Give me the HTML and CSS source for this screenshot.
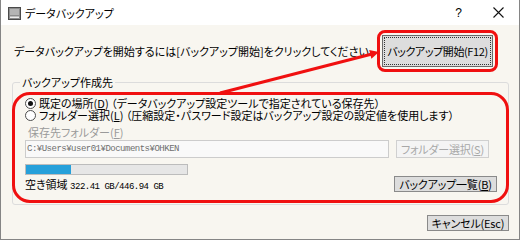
FILE: index.html
```html
<!DOCTYPE html>
<html lang="ja">
<head>
    <meta charset="UTF-8">
    <title>データバックアップ</title>
    <link rel="stylesheet" href="styles.css">
</head>
<body>
    <div class="window">
        <div class="titlebar">
            <svg class="app-icon" width="13" height="13" viewBox="0 0 13 13">
                <rect x="0.5" y="0.5" width="12" height="12" fill="#8c8c8c" stroke="#4a4a4a"/>
                <rect x="2" y="2" width="9" height="6" fill="#b4b4b4"/>
                <rect x="2" y="9.5" width="9" height="1.5" fill="#ececec"/>
            </svg>
            <span class="title">データバックアップ</span>
            <span class="help">?</span>
            <svg class="close" width="11" height="11" viewBox="0 0 11 11">
                <path d="M0.5 0.5 L10.5 10.5 M10.5 0.5 L0.5 10.5" stroke="#111" stroke-width="1.1"/>
            </svg>
        </div>

        <div class="body">
            <div class="intro">
                <p class="intro-text">データバックアップを開始するには[バックアップ開始]をクリックしてください</p>
                <div class="mark mark-btn">
                    <button class="btn btn-start">バックアップ開始(F12)</button>
                </div>
            </div>

            <fieldset class="group">
                <legend>バックアップ作成先</legend>
                <div class="mark mark-group">
                    <div class="radio-row">
                        <span class="radio checked"></span>
                        <span>既定の場所(<u>D</u>) （データバックアップ設定ツールで指定されている保存先）</span>
                    </div>
                    <div class="radio-row">
                        <span class="radio"></span>
                        <span>フォルダー選択(<u>L</u>) （圧縮設定・パスワード設定はバックアップ設定の設定値を使用します）</span>
                    </div>
                    <div class="field-label">保存先フォルダー(<u>F</u>)</div>
                    <div class="path-row">
                        <div class="textbox mono">C:¥Users¥user01¥Documents¥OHKEN</div>
                        <button class="btn btn-disabled">フォルダー選択(<u>S</u>)</button>
                    </div>
                    <div class="space-row">
                        <div class="space-info">
                            <div class="progress"><div class="progress-fill" style="width: 28%"></div></div>
                            <div class="space-text">空き領域 <span class="mono">322.41 GB/446.94 GB</span></div>
                        </div>
                        <button class="btn btn-list">バックアップ一覧(<u>B</u>)</button>
                    </div>
                </div>
            </fieldset>

            <div class="footer">
                <button class="btn btn-cancel">キャンセル(Esc)</button>
            </div>
        </div>

        <svg class="arrow" width="520" height="240" viewBox="0 0 520 240">
            <line x1="219" y1="93" x2="371" y2="54" stroke="#f01010" stroke-width="3"/>
            <polygon points="378,52 370.4,58.8 368.2,49.9" fill="#f01010"/>
        </svg>
    </div>
</body>
</html>
```

FILE: styles.css
```css
* {
    box-sizing: border-box;
}
body {
    margin: 0;
    font-family: "Noto Sans CJK JP", sans-serif;
    font-size: 11px;
    font-feature-settings: "palt";
    color: #000;
}
.window {
    position: relative;
    width: 520px;
    height: 240px;
    background-color: #f8f6f0;
    border: 1px solid #858585;
    border-top: none;
    overflow: hidden;
}
.titlebar {
    height: 25px;
    background-color: #fff;
    display: flex;
    align-items: center;
    padding-left: 7px;
}
.app-icon {
    margin-top: 1px;
}
.title {
    margin-left: 4px;
    font-size: 11px;
}
.help {
    margin-left: auto;
    font-family: "Liberation Sans", sans-serif;
    font-size: 12px;
    margin-right: 31px;
}
.close {
    margin-right: 15px;
}
.body {
    padding: 0 10px 0 11px;
}
.intro {
    display: flex;
    align-items: center;
    justify-content: space-between;
    margin-top: 5px;
    padding-left: 2px;
    padding-right: 11px;
}
.intro-text {
    margin: 0;
    line-height: 12px;
}
.mark {
    border: 3px solid #f01010;
}
.mark-btn {
    border-radius: 8px;
    padding: 2px;
}
.btn {
    font-family: "Noto Sans CJK JP", sans-serif;
    font-size: 11px;
    font-feature-settings: "palt";
    color: #000;
    background-color: #dddddd;
    border: 1px solid #8a8a8a;
    padding: 0;
    margin: 0;
    line-height: 12px;
    white-space: nowrap;
    letter-spacing: -0.2px;
}
.btn-start {
    width: 111px;
    height: 32px;
    border-color: #6a6a6a;
    outline: 1px dotted #333;
    outline-offset: -3px;
    letter-spacing: -0.4px;
}
.group {
    margin: 4px 0 0 0;
    padding: 0;
    border: 1px solid #dcdcdc;
    border-radius: 3px;
}
.group legend {
    margin-left: 7px;
    padding: 0 2px;
    line-height: 12px;
}
.mark-group {
    margin: 4px -1px 1px -1px;
    border-radius: 18px;
    padding: 2px 9px 7px 10px;
}
.radio-row {
    display: flex;
    align-items: center;
    height: 12px;
    line-height: 12px;
    white-space: nowrap;
}
.radio {
    width: 11px;
    height: 11px;
    border: 1px solid #4d4d4d;
    border-radius: 50%;
    background-color: #fff;
    margin-right: 3px;
    display: flex;
    align-items: center;
    justify-content: center;
}
.radio.checked::after {
    content: "";
    width: 5px;
    height: 5px;
    border-radius: 50%;
    background-color: #111;
}
.field-label {
    margin-top: 5px;
    padding-left: 3px;
    line-height: 12px;
    color: #9a9a9a;
}
.path-row {
    display: flex;
    gap: 7px;
    margin-top: 2px;
}
.textbox {
    width: 364px;
    height: 18px;
    border: 1px solid #cccccc;
    background-color: #f9f9f9;
    color: #6e6e6e;
    padding-left: 1px;
    line-height: 16px;
}
.mono {
    font-family: "Liberation Mono", monospace;
    font-size: 9px;
    letter-spacing: -0.5px;
    font-feature-settings: normal;
}
.btn-disabled {
    width: 93px;
    height: 18px;
    color: #a8a8a8;
    background-color: #f4f4f4;
    border-color: #d0d0d0;
}
.space-row {
    display: flex;
    justify-content: space-between;
    margin-top: 6px;
}
.space-info {
    display: flex;
    flex-direction: column;
    gap: 3px;
}
.progress {
    width: 163px;
    height: 11px;
    border: 1px solid #bcbcbc;
    background-color: #e6e6e6;
}
.progress-fill {
    height: 100%;
    background-color: #26a0da;
}
.space-text {
    line-height: 12px;
}
.btn-list {
    align-self: flex-end;
    width: 103px;
    height: 16px;
    margin-bottom: 1px;
}
.footer {
    display: flex;
    justify-content: flex-end;
    margin-top: 10px;
}
.btn-cancel {
    width: 82px;
    height: 16px;
}
.arrow {
    position: absolute;
    left: 0;
    top: 0;
    pointer-events: none;
}
```
